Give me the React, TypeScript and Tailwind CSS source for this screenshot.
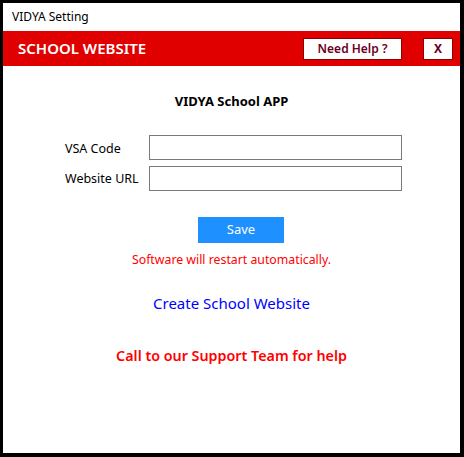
import React from "react";

const font = { fontFamily: '"Noto Sans", "Open Sans", Arial, sans-serif' };

export default function App() {
  return (
    <div
      className="w-[464px] h-[457px] bg-white border-black border-t-[3px] border-l-[3px] border-r-[4px] border-b-[4px] flex flex-col text-black"
      style={font}
    >
      <div className="h-[28px] flex items-center pl-[9px] text-[12px]">VIDYA Setting</div>
      <div className="h-[35px] bg-[#e00000] flex items-center pl-[15px] pr-[7px]">
        <div className="text-white font-semibold text-[15px] flex-1">SCHOOL WEBSITE</div>
        <button className="w-[99px] h-[22px] bg-white border border-[#8b0000] text-[#6b0020] text-[12px] font-semibold flex items-center justify-center">
          Need Help ?
        </button>
        <button className="ml-[21px] w-[30px] h-[22px] bg-white border border-[#8b0000] text-[#6b0020] text-[12px] font-bold flex items-center justify-center">
          X
        </button>
      </div>

      <div className="flex flex-col items-center">
        <div className="mt-[26px] h-[20px] flex items-center font-bold text-[13px]">VIDYA School APP</div>

        <div className="mt-[23px] flex flex-col gap-[6px] self-start ml-[62px]">
          <div className="flex items-center">
            <label className="w-[84px] pt-[3px] text-[12.5px]">VSA Code</label>
            <input className="w-[253px] h-[25px] border border-[#7a7a7a] outline-none px-1 text-[13px]" />
          </div>
          <div className="flex items-center">
            <label className="w-[84px] pt-[2px] text-[12.5px]">Website URL</label>
            <input className="w-[253px] h-[25px] border border-[#7a7a7a] outline-none px-1 text-[13px]" />
          </div>
        </div>

        <div className="mt-[26px] w-full flex justify-center pl-[19px]">
          <button className="w-[86px] h-[26px] bg-[#1e90ff] text-white text-[13px] flex items-center justify-center">
            Save
          </button>
        </div>

        <div className="mt-[8px] h-[18px] flex items-center text-[12.3px] text-[#ff0000]">
          Software will restart automatically.
        </div>

        <a className="mt-[23px] h-[22px] flex items-center text-[15px] text-[#0000ff] cursor-pointer">
          Create School Website
        </a>

        <div className="mt-[31px] h-[22px] flex items-center text-[14.3px] font-semibold text-[#ff0000]">
          Call to our Support Team for help
        </div>
      </div>
    </div>
  );
}
